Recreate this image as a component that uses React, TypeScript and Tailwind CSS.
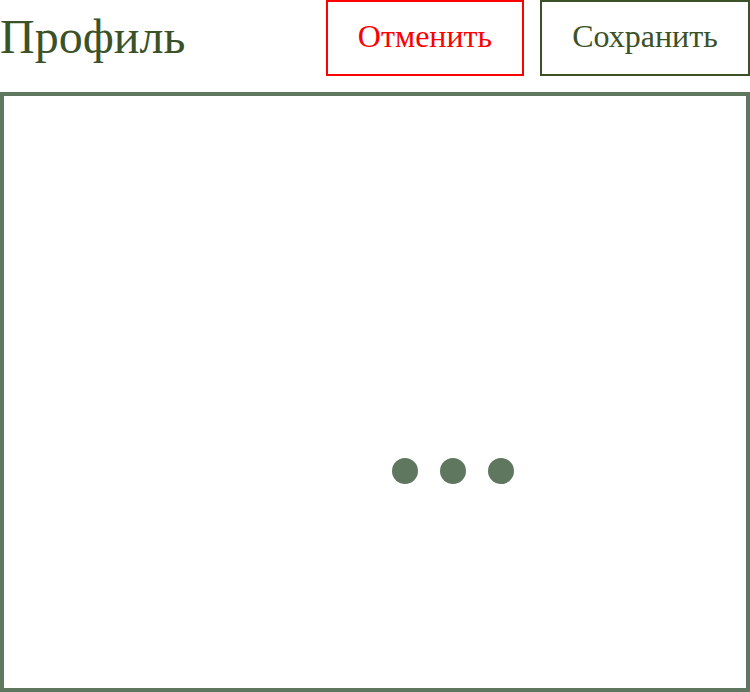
export default function App() {
  return (
    <div className="w-[750px] bg-white" style={{ fontFamily: '"Liberation Serif", serif' }}>
      {/* Header */}
      <div className="flex h-[76px] items-start">
        <h1 className="mt-[13px] text-[48px] leading-none text-[#3b5229]">Профиль</h1>
        <div className="ml-auto flex gap-4">
          <button className="flex h-[76px] w-[198px] items-center justify-center border-2 border-[#ff0000] pb-[5px] text-[32px] text-[#ff0000]">
            Отменить
          </button>
          <button className="flex h-[76px] w-[210px] items-center justify-center border-2 border-[#3b5229] pb-[5px] text-[32px] text-[#3b5229]">
            Сохранить
          </button>
        </div>
      </div>

      {/* Content panel */}
      <div className="mt-4 h-[600px] border-4 border-[#5f775f] pl-[388px] pt-[362px]">
        <div className="flex gap-[22px]">
          <span className="h-[26px] w-[26px] rounded-full bg-[#5f775f]" />
          <span className="h-[26px] w-[26px] rounded-full bg-[#5f775f]" />
          <span className="h-[26px] w-[26px] rounded-full bg-[#5f775f]" />
        </div>
      </div>
    </div>
  );
}
